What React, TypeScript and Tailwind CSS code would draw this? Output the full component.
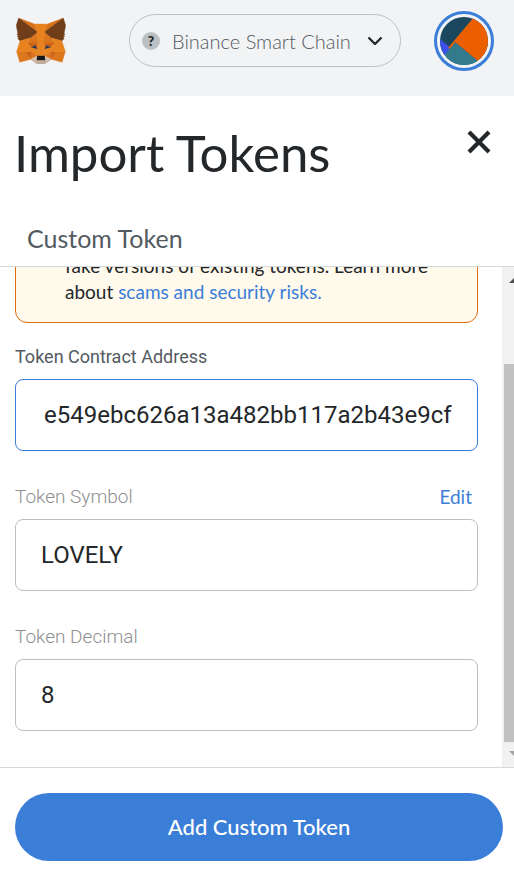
import { useEffect, useRef, useState } from 'react';

const foxShapes = [
  { fill: '#D9701A', points: '274.1,35.5 174.6,109.4 193,65.8' },
  { fill: '#D9701A', points: '44.4,35.5 143.1,110.1 125.6,65.8' },
  { fill: '#DB761C', points: '238.3,206.8 211.8,247.4 268.5,263 284.8,207.7' },
  { fill: '#DB761C', points: '33.9,207.7 50.1,263 106.8,247.4 80.3,206.8' },
  { fill: '#DB761C', points: '103.6,138.2 87.8,162.1 144.1,164.6 142.1,104.1' },
  { fill: '#DB761C', points: '214.9,138.2 175.9,103.4 174.6,164.6 230.8,162.1' },
  { fill: '#DB761C', points: '106.8,247.4 140.6,230.9 111.4,208.1' },
  { fill: '#DB761C', points: '177.9,230.9 211.8,247.4 207.1,208.1' },
  { fill: '#D7C1B3', points: '211.8,247.4 177.9,230.9 180.6,253 180.3,262.3' },
  { fill: '#D7C1B3', points: '106.8,247.4 138.3,262.3 138.1,253 140.6,230.9' },
  { fill: '#CD6116', points: '106.8,247.4 111.6,206.8 80.3,207.7' },
  { fill: '#CD6116', points: '207,206.8 211.8,247.4 238.3,207.7' },
  { fill: '#CD6116', points: '230.8,162.1 174.6,164.6 179.8,193.5 188.1,176.1 208.1,185.2' },
  { fill: '#CD6116', points: '110.6,185.2 130.6,176.1 138.8,193.5 144.1,164.6 87.8,162.1' },
  { fill: '#DB761C', points: '87.8,162.1 111.4,208.1 110.6,185.2' },
  { fill: '#DB761C', points: '208.1,185.2 207.1,208.1 230.8,162.1' },
  { fill: '#DB761C', points: '144.1,164.6 138.8,193.5 145.4,227.6 146.9,182.7' },
  { fill: '#DB761C', points: '174.6,164.6 171.9,182.6 173.1,227.6 179.8,193.5' },
  { fill: '#E8821E', points: '179.8,193.5 173.1,227.6 177.9,230.9 207.1,208.1 208.1,185.2' },
  { fill: '#E8821E', points: '110.6,185.2 111.4,208.1 140.6,230.9 145.4,227.6 138.8,193.5' },
  { fill: '#C0AD9E', points: '180.3,262.3 180.6,253 178.1,250.8 140.4,250.8 138.1,253 138.3,262.3 106.8,247.4 117.8,256.4 140.1,271.9 178.4,271.9 200.8,256.4 211.8,247.4' },
  { fill: '#161616', points: '177.9,230.9 173.1,227.6 145.4,227.6 140.6,230.9 138.1,253 140.4,250.8 178.1,250.8 180.6,253' },
  { fill: '#6F3D18', points: '278.3,114.2 286.8,73.4 274.1,35.5 177.9,106.9 214.9,138.2 267.2,153.5 278.8,140 273.8,136.4 281.8,129.1 275.6,124.3 283.6,118.2' },
  { fill: '#6F3D18', points: '31.8,73.4 40.3,114.2 34.9,118.2 42.9,124.3 36.8,129.1 44.8,136.4 39.8,140 51.3,153.5 103.6,138.2 140.6,106.9 44.4,35.5' },
  { fill: '#E8821E', points: '267.2,153.5 214.9,138.2 230.8,162.1 207.1,208.1 238.3,207.7 284.8,207.7' },
  { fill: '#E8821E', points: '103.6,138.2 51.3,153.5 33.9,207.7 80.3,207.7 111.4,208.1 87.8,162.1' },
  { fill: '#E8821E', points: '174.6,164.6 177.9,106.9 193.1,65.8 125.6,65.8 140.6,106.9 144.1,164.6 145.3,182.8 145.4,227.6 173.1,227.6 173.3,182.8' },
  { fill: '#233447', points: '138.8,193.5 110.6,185.2 130.5,176.1' },
  { fill: '#233447', points: '179.7,193.5 188,176.1 208,185.2' },
];

function FoxLogo() {
  return (
    <svg className="h-[46px] w-[50px]" viewBox="32 35 255 237" aria-hidden="true">
      {foxShapes.map((shape, index) => (
        <polygon key={index} fill={shape.fill} stroke={shape.fill} strokeWidth="2" points={shape.points} />
      ))}
    </svg>
  );
}

function Header() {
  return (
    <header className="flex h-24 shrink-0 items-start justify-between bg-[#f2f3f5] pl-4 pr-5">
      <a href="#home" aria-label="Home" className="mt-[18px]">
        <FoxLogo />
      </a>

      {/* Network picker */}
      <button
        type="button"
        className="ml-[30px] mt-[14px] flex h-[53px] w-[272px] items-center rounded-full border border-[#bbc0c5] pl-3 pr-[17px] text-[#535a61]"
      >
        <span className="flex h-[18px] w-[18px] items-center justify-center rounded-full bg-[#bbc0c5] text-sm font-black leading-none text-[#24272a]">
          ?
        </span>
        <span className="ml-3 flex-1 whitespace-nowrap text-left text-[20px] font-light">Binance Smart Chain</span>
        <svg className="h-4 w-4" viewBox="0 0 16 16" fill="none" stroke="#24272a" strokeWidth="2.4" aria-hidden="true">
          <path d="M1.500 4.500 8 11l6.500-6.500" strokeLinejoin="round" />
        </svg>
      </button>

      {/* Account avatar */}
      <button
        type="button"
        aria-label="Account"
        className="mt-[11px] flex h-[60px] w-[60px] items-center justify-center rounded-full border-[3px] border-[#3b7ed8]"
      >
        <svg className="h-12 w-12 rounded-full" viewBox="0 0 48 48" aria-hidden="true">
          <rect width="48" height="48" fill="#1b485f" />
          <path d="M15.300 25.300 38 44 30 48H0V42z" fill="#337b8c" />
          <path d="M0 22.300 9 29.200 9.300 32 5 37.700 0 43z" fill="#3a50e6" />
          <path d="M34 0 8.300 30.500 9.500 32 15.300 25.300 38 44 48 48V0z" fill="#eb5f00" />
        </svg>
      </button>
    </header>
  );
}

type FieldProps = {
  id: string;
  label: string;
  value: string;
  onChange: (value: string) => void;
  active?: boolean;
  action?: string;
};

function Field({ id, label, value, onChange, active, action }: FieldProps) {
  const inputRef = useRef<HTMLInputElement>(null);

  // Long values show their tail
  useEffect(() => {
    const input = inputRef.current;
    if (input) input.scrollLeft = input.scrollWidth;
  }, [value]);

  return (
    <div>
      <div className="flex h-6 items-center justify-between pr-[6px] text-[19px] leading-6">
        <label
          htmlFor={id}
          className={`font-['Roboto',sans-serif] ${active ? 'text-lg text-[#535a61]' : 'font-light text-[#8f8f8f]'}`}
        >
          {label}
        </label>
        {action && (
          <button type="button" className="text-[#3b7ed8]">
            {action}
          </button>
        )}
      </div>
      <input
        ref={inputRef}
        id={id}
        type="text"
        value={value}
        onChange={(e) => onChange(e.target.value)}
        className={`mt-[10px] block h-[72px] w-full rounded-lg border bg-white px-[25px] font-['Roboto',sans-serif] text-2xl text-[#24272a] outline-none ${active ? 'border-[#3b7ed8]' : 'border-[#bbc0c5]'}`}
      />
    </div>
  );
}

function ScrollTrack() {
  return (
    <div className="flex w-3 shrink-0 flex-col overflow-hidden bg-[#f1f1f1] pl-[2px]" aria-hidden="true">
      <svg className="h-[25px] w-[22px] shrink-0" viewBox="0 0 22 25">
        <path d="M5 16 11 10l6 6z" fill="#505050" />
      </svg>
      <div className="mt-[72px] w-6 flex-1 bg-[#c1c1c1]" />
      <svg className="h-[25px] w-[22px] shrink-0" viewBox="0 0 22 25">
        <path d="M5 9h12l-6 6z" fill="#a3a3a3" />
      </svg>
    </div>
  );
}

export default function App() {
  const [address, setAddress] = useState('0x9e24415d1e549ebc626a13a482bb117a2b43e9cf');
  const [symbol, setSymbol] = useState('LOVELY');
  const [decimals, setDecimals] = useState('8');

  return (
    <div className="flex h-screen flex-col overflow-hidden bg-white font-['Lato',sans-serif] text-[#24272a]">
      <Header />

      {/* Title and tab */}
      <div className="shrink-0 border-b border-[#d6d9dc]">
        <div className="flex items-start justify-between pl-[14px] pr-[22px] pt-7">
          <h1 className="text-[51px] leading-[58px]">Import Tokens</h1>
          <button type="button" aria-label="Close" className="mt-[5px]">
            <svg className="h-[26px] w-[26px]" viewBox="0 0 26 26" stroke="#24272a" strokeWidth="4.200" aria-hidden="true">
              <path d="M3 3 23 23M23 3 3 23" />
            </svg>
          </button>
        </div>
        <div className="pl-[27px] pt-10">
          <button type="button" className="block h-11 pb-3 text-[25px] leading-8 text-[#535a61]">
            Custom Token
          </button>
        </div>
      </div>

      {/* Form */}
      <div className="flex min-h-0 flex-1">
        <form className="flex min-w-0 flex-1 flex-col justify-end gap-[34px] overflow-hidden pb-9 pl-[15px] pr-6">
          <div className="-mb-3 shrink-0 rounded-xl border border-[#e06a0c] bg-[#fffaeb] py-[17px] pl-[49px] pr-4 text-[19px] leading-[26px]">
            fake versions of existing tokens. Learn more
            <br />
            about{' '}
            <a href="#risks" className="text-[#3b7ed8]">
              scams and security risks.
            </a>
          </div>
          <Field id="address" label="Token Contract Address" value={address} onChange={setAddress} active />
          <Field id="symbol" label="Token Symbol" value={symbol} onChange={setSymbol} action="Edit" />
          <Field id="decimals" label="Token Decimal" value={decimals} onChange={setDecimals} />
        </form>
        <ScrollTrack />
      </div>

      <footer className="shrink-0 border-t border-[#d6d9dc] pb-[13px] pl-[15px] pr-[11px] pt-[25px]">
        <button type="button" className="h-[68px] w-full rounded-full bg-[#3b7ed8] pb-[2px] text-[22px] font-medium text-white">
          Add Custom Token
        </button>
      </footer>
    </div>
  );
}
